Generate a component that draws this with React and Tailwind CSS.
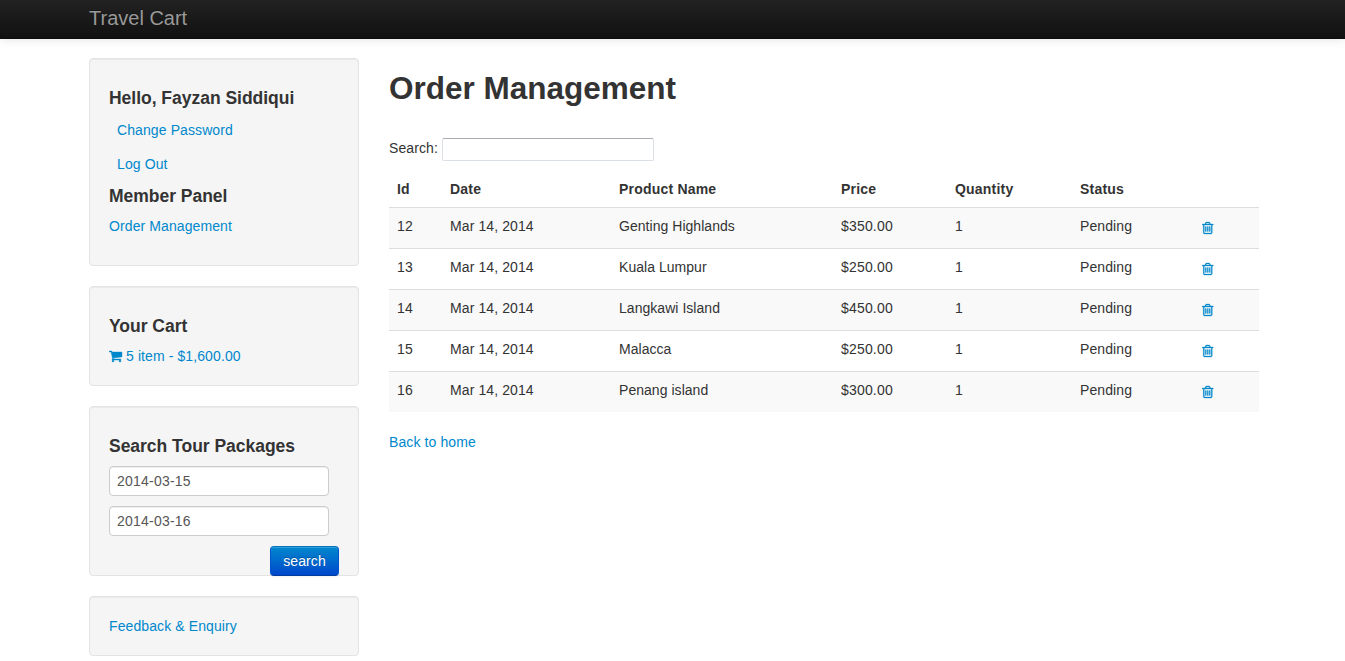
const orders = [
  { id: 12, product: "Genting Highlands", price: "$350.00" },
  { id: 13, product: "Kuala Lumpur", price: "$250.00" },
  { id: 14, product: "Langkawi Island", price: "$450.00" },
  { id: 15, product: "Malacca", price: "$250.00" },
  { id: 16, product: "Penang island", price: "$300.00" },
];

function CartIcon() {
  return (
    <svg viewBox="0 0 1792 1792" className="mr-[3px] size-[14px] fill-current stroke-current stroke-[50px]" aria-hidden="true">
      <path d="M640 1536q0 52-38 90t-90 38-90-38-38-90 38-90 90-38 90 38 38 90zm896 0q0 52-38 90t-90 38-90-38-38-90 38-90 90-38 90 38 38 90zm128-1088v512q0 24-16.5 42.5t-40.5 21.5l-1044 122q13 60 13 70 0 16-24 64h920q26 0 45 19t19 45-19 45-45 19h-1024q-26 0-45-19t-19-45q0-11 8-31.5t16-36 21.5-40 15.5-29.5l-177-823h-204q-26 0-45-19t-19-45 19-45 45-19h256q16 0 28.5 6.5t19.5 15.5 13 24.5 8 26 5.5 29.5 4.5 26h1201q26 0 45 19t19 45z" />
    </svg>
  );
}

function TrashIcon() {
  return (
    <svg viewBox="160 0 1472 1792" className="h-[14px] w-[11.5px] fill-current stroke-current stroke-[40px]" aria-hidden="true">
      <path d="M704 736v576q0 14-9 23t-23 9h-64q-14 0-23-9t-9-23v-576q0-14 9-23t23-9h64q14 0 23 9t9 23zm256 0v576q0 14-9 23t-23 9h-64q-14 0-23-9t-9-23v-576q0-14 9-23t23-9h64q14 0 23 9t9 23zm256 0v576q0 14-9 23t-23 9h-64q-14 0-23-9t-9-23v-576q0-14 9-23t23-9h64q14 0 23 9t9 23zm128 724v-948h-896v948q0 22 7 40.5t14.5 27 10.5 8.5h832q3 0 10.5-8.5t14.5-27 7-40.5zm-672-1076h448l-48-117q-7-9-17-11h-317q-10 2-17 11zm928 32v64q0 14-9 23t-23 9h-96v948q0 83-47 143.5t-113 60.5h-832q-66 0-113-58.5t-47-141.5v-952h-96q-14 0-23-9t-9-23v-64q0-14 9-23t23-9h309l70-167q15-37 54-63t79-26h320q40 0 79 26t54 63l70 167h309q14 0 23 9t9 23z" />
    </svg>
  );
}

function Well({ className = "", children }) {
  return (
    <section
      className={`rounded-[4px] border border-[#e3e3e3] bg-[#f5f5f5] px-[19px] pt-[19px] shadow-[inset_0_1px_1px_rgba(0,0,0,0.05)] ${className}`}
    >
      {children}
    </section>
  );
}

function Heading({ children }) {
  return <h4 className="my-2.5 text-[17.5px] leading-5 font-bold tracking-[-0.02px]">{children}</h4>;
}

function Link({ className = "block", children }) {
  return (
    <a href="#" className={`text-[#0088cc] ${className}`}>
      {children}
    </a>
  );
}

function DateInput({ value }) {
  return (
    <input
      type="text"
      defaultValue={value}
      className="mb-2.5 block h-[30px] w-[220px] rounded-[4px] border border-[#cccccc] bg-white px-[7px] text-sm leading-5 tracking-[0.22px] text-[#555555] shadow-[inset_0_1px_1px_rgba(0,0,0,0.075)]"
    />
  );
}

export default function App() {
  return (
    <div className="h-[661px] overflow-hidden bg-white font-['Liberation_Sans',Arial,sans-serif] text-sm leading-5 tracking-[0.1px] text-[#333333]">
      <header className="h-[39px] border-b border-[#0e0e0e] bg-linear-to-b from-[#222222] to-[#111111] pt-2 pl-[89px] shadow-[0_1px_10px_rgba(0,0,0,0.1)]">
        <a href="#" className="block text-xl leading-5 tracking-normal text-[#999999] [text-shadow:0_-1px_0_rgba(0,0,0,0.25)]">
          Travel Cart
        </a>
      </header>

      <div className="mt-[19px] ml-[89px] flex w-[1170px] items-start gap-[30px]">
        <aside className="flex w-[270px] shrink-0 flex-col gap-5">
          <Well className="h-[208px]">
            <Heading>Hello, Fayzan Siddiqui</Heading>
            <Link className="mt-3 ml-2 block">Change Password</Link>
            <Link className="mt-3.5 mb-3 ml-2 block">Log Out</Link>
            <Heading>Member Panel</Heading>
            <Link>Order Management</Link>
          </Well>

          <Well className="h-[100px]">
            <Heading>Your Cart</Heading>
            <Link className="flex items-center">
              <CartIcon />5 item - $1,600.00
            </Link>
          </Well>

          <Well className="h-[170px]">
            <Heading>Search Tour Packages</Heading>
            <DateInput value="2014-03-15" />
            <DateInput value="2014-03-16" />
            <button className="ml-auto block h-[30px] w-[69px] rounded-[4px] border border-t-[#0074bd] border-r-[#0055cc] border-b-[#003ba0] border-l-[#0055cc] bg-linear-to-b from-[#0088cc] to-[#0044cc] bg-origin-border text-sm leading-5 text-white shadow-[inset_0_1px_0_rgba(255,255,255,0.2),0_1px_2px_rgba(0,0,0,0.05)] [text-shadow:0_-1px_0_rgba(0,0,0,0.25)]">
              search
            </button>
          </Well>

          <Well className="h-[60px]">
            <Link>Feedback &amp; Enquiry</Link>
          </Well>
        </aside>

        <main className="w-[870px] pt-2.5">
          <h2 className="text-[31.5px] leading-10 font-bold tracking-normal">Order Management</h2>

          <label className="mt-[30px] flex h-[23px] gap-1">
            <span className="w-[49px]">Search:</span>
            <input
              type="text"
              className="h-[23px] w-[212px] rounded-[2px] border border-[#dbdfe6] border-t-[#abadb3] bg-white px-1"
            />
          </label>

          <table className="mt-2.5 w-full table-fixed border-collapse text-left">
            <colgroup>
              <col className="w-[53px]" />
              <col className="w-[169px]" />
              <col className="w-[222px]" />
              <col className="w-[114px]" />
              <col className="w-[125px]" />
              <col className="w-[122px]" />
              <col className="w-[65px]" />
            </colgroup>
            <thead>
              <tr className="h-9 tracking-[0.2px] *:px-2 *:font-bold">
                <th>Id</th>
                <th>Date</th>
                <th>Product Name</th>
                <th>Price</th>
                <th>Quantity</th>
                <th>Status</th>
                <th />
              </tr>
            </thead>
            <tbody>
              {orders.map((order) => (
                <tr
                  key={order.id}
                  className="h-[41px] border-t border-[#dddddd] odd:bg-[#f9f9f9] *:px-2 *:pt-2 *:align-top"
                >
                  <td>{order.id}</td>
                  <td>Mar 14, 2014</td>
                  <td className="tracking-[0.04px]">{order.product}</td>
                  <td className="tracking-[0.18px]">{order.price}</td>
                  <td>1</td>
                  <td>Pending</td>
                  <td>
                    <a href="#" aria-label="Delete" className="mt-[5px] block w-[12px] text-[#0088cc]">
                      <TrashIcon />
                    </a>
                  </td>
                </tr>
              ))}
            </tbody>
          </table>

          <Link className="mt-5 block">Back to home</Link>
        </main>
      </div>
    </div>
  );
}
